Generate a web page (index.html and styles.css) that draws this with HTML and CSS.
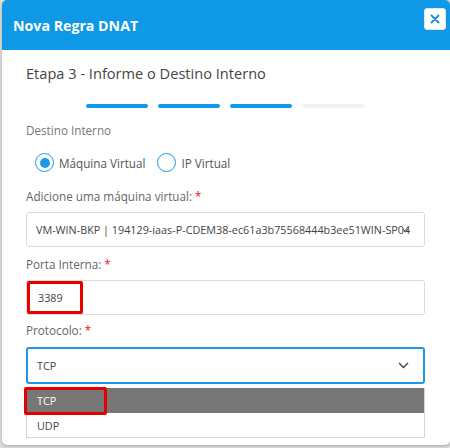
FILE: index.html
```html
<!DOCTYPE html>
<html lang="pt-BR">
<head>
<meta charset="utf-8">
<title>Nova Regra DNAT</title>
<link rel="stylesheet" href="styles.css">
</head>
<body>
<div class="backdrop">
  <div class="modal">
    <div class="modal-header">
      <h1 class="modal-title">Nova Regra DNAT</h1>
      <button class="close-btn" type="button" aria-label="Fechar">
        <svg width="10" height="10" viewBox="0 0 10 10"><path d="M1.5 1.5 L8.5 8.5 M8.5 1.5 L1.5 8.5" stroke="#1a8fe0" stroke-width="1.8" stroke-linecap="round"/></svg>
      </button>
    </div>
    <div class="modal-body">
      <h2 class="step-title">Etapa 3 - Informe o Destino Interno</h2>
      <div class="steps">
        <span class="step done"></span>
        <span class="step done"></span>
        <span class="step done"></span>
        <span class="step"></span>
      </div>

      <div class="section-label">Destino Interno</div>
      <div class="radios">
        <label class="radio"><span class="radio-dot checked"></span>Máquina Virtual</label>
        <label class="radio"><span class="radio-dot"></span>IP Virtual</label>
      </div>

      <div class="field-label first">Adicione uma máquina virtual: <span class="req">*</span></div>
      <div class="control vm-select">
        <span class="vm-text">VM-WIN-BKP | 194129-iaas-P-CDEM38-ec61a3b75568444b3ee51WIN-SP04</span>
        <svg class="vm-caret" width="7" height="5" viewBox="0 0 7 5"><path d="M0.8 0.8 L3.5 3.8 L6.2 0.8" fill="none" stroke="#555" stroke-width="1.1"/></svg>
      </div>

      <div class="field-label">Porta Interna: <span class="req">*</span></div>
      <div class="control port-input">
        <span class="highlight port-mark">3389</span>
      </div>

      <div class="field-label proto-label">Protocolo: <span class="req">*</span></div>
      <div class="control proto-select">
        <span>TCP</span>
        <svg class="chevron" width="11" height="7" viewBox="0 0 11 7"><path d="M1 1 L5.5 5.5 L10 1" fill="none" stroke="#444" stroke-width="1.4"/></svg>
      </div>
      <ul class="options">
        <li class="option selected"><span class="highlight opt-mark">TCP</span></li>
        <li class="option">UDP</li>
      </ul>
    </div>
  </div>
</div>
</body>
</html>
```

FILE: styles.css
```css
* { box-sizing: border-box; }

html, body {
  margin: 0;
  padding: 0;
}

body {
  width: 450px;
  height: 448px;
  overflow: hidden;
  background: #dcdcdc;
  font-family: "Open Sans", "Noto Sans", sans-serif;
}

.backdrop {
  padding-left: 2px;
  height: 448px;
}

.modal {
  width: 448px;
  height: 445px;
  background: #fff;
  border-radius: 5px;
  overflow: hidden;
  display: flex;
  flex-direction: column;
  box-shadow: 0 1px 3px rgba(0, 0, 0, 0.25);
}

.modal-header {
  flex: 0 0 50px;
  background: #0e98e6;
  display: flex;
  align-items: flex-start;
  justify-content: space-between;
  padding: 8px 4px 0 11px;
}

.modal-title {
  margin: 9px 0 0;
  font-size: 14.2px;
  font-weight: 700;
  color: #fff;
  line-height: 18px;
}

.close-btn {
  width: 22px;
  height: 22px;
  padding: 0;
  border: 1px solid #d8e8f5;
  background: #fff;
  border-radius: 3px;
  display: flex;
  align-items: center;
  justify-content: center;
}

.modal-body {
  padding: 13px 23px 0 24px;
}

.step-title {
  margin: 0;
  font-size: 14.6px;
  font-weight: 500;
  color: #454545;
  line-height: 20px;
}

.steps {
  display: flex;
  gap: 10px;
  padding-left: 60px;
  margin-top: 21px;
}

.step {
  width: 62px;
  height: 4px;
  border-radius: 2px;
  background: #eff2f6;
}

.step.done { background: #0e98e6; }

.section-label {
  margin-top: 14px;
  font-size: 11.7px;
  color: #777;
  line-height: 17px;
}

.radios {
  display: flex;
  gap: 12px;
  padding-left: 9px;
  margin-top: 14px;
}

.radio {
  display: flex;
  align-items: center;
  gap: 5px;
  font-size: 11.7px;
  color: #555;
  line-height: 18px;
}

.radio-dot {
  width: 19px;
  height: 19px;
  border-radius: 50%;
  border: 1.5px solid #1a9ae6;
  display: flex;
  align-items: center;
  justify-content: center;
}

.radio-dot.checked::after {
  content: "";
  width: 10px;
  height: 10px;
  border-radius: 50%;
  background: #1a9ae6;
}

.field-label {
  margin-top: 8px;
  font-size: 11.7px;
  color: #666;
  line-height: 18px;
}

.field-label.first { margin-top: 15px; }
.field-label.proto-label { margin-top: 6px; }

.req { color: #e02020; }

.control {
  margin-top: 7px;
  width: 399px;
  height: 35px;
  border: 1px solid #dcdcdc;
  border-radius: 3px;
  display: flex;
  align-items: center;
  font-size: 10.8px;
  color: #444;
}

.vm-select { padding-left: 9px; }

.vm-text {
  white-space: nowrap;
}

.vm-caret {
  margin-left: -8px;
  margin-top: 1px;
}

.highlight {
  border: 3px solid #e60000;
}

.port-mark {
  width: 56px;
  height: 33px;
  display: flex;
  align-items: center;
  padding-left: 8px;
  border-radius: 2px;
}

.proto-select {
  height: 37px;
  margin-top: 8px;
  border: 2px solid #1a9ae6;
  padding: 0 14px 0 9px;
  justify-content: space-between;
}

.options {
  list-style: none;
  margin: 4px 0 0;
  padding: 0;
  width: 399px;
  border: 1px solid #d5d5d5;
  border-top: 0;
}

.option {
  height: 24px;
  display: flex;
  align-items: center;
  padding-left: 10px;
  font-size: 10.8px;
  color: #444;
}

.option.selected {
  background: #777;
  color: #fff;
  height: 25px;
  padding-left: 0;
}

.opt-mark {
  margin-left: -3px;
  width: 83px;
  height: 28px;
  display: flex;
  align-items: center;
  padding-left: 10px;
  border-radius: 2px;
}
```
